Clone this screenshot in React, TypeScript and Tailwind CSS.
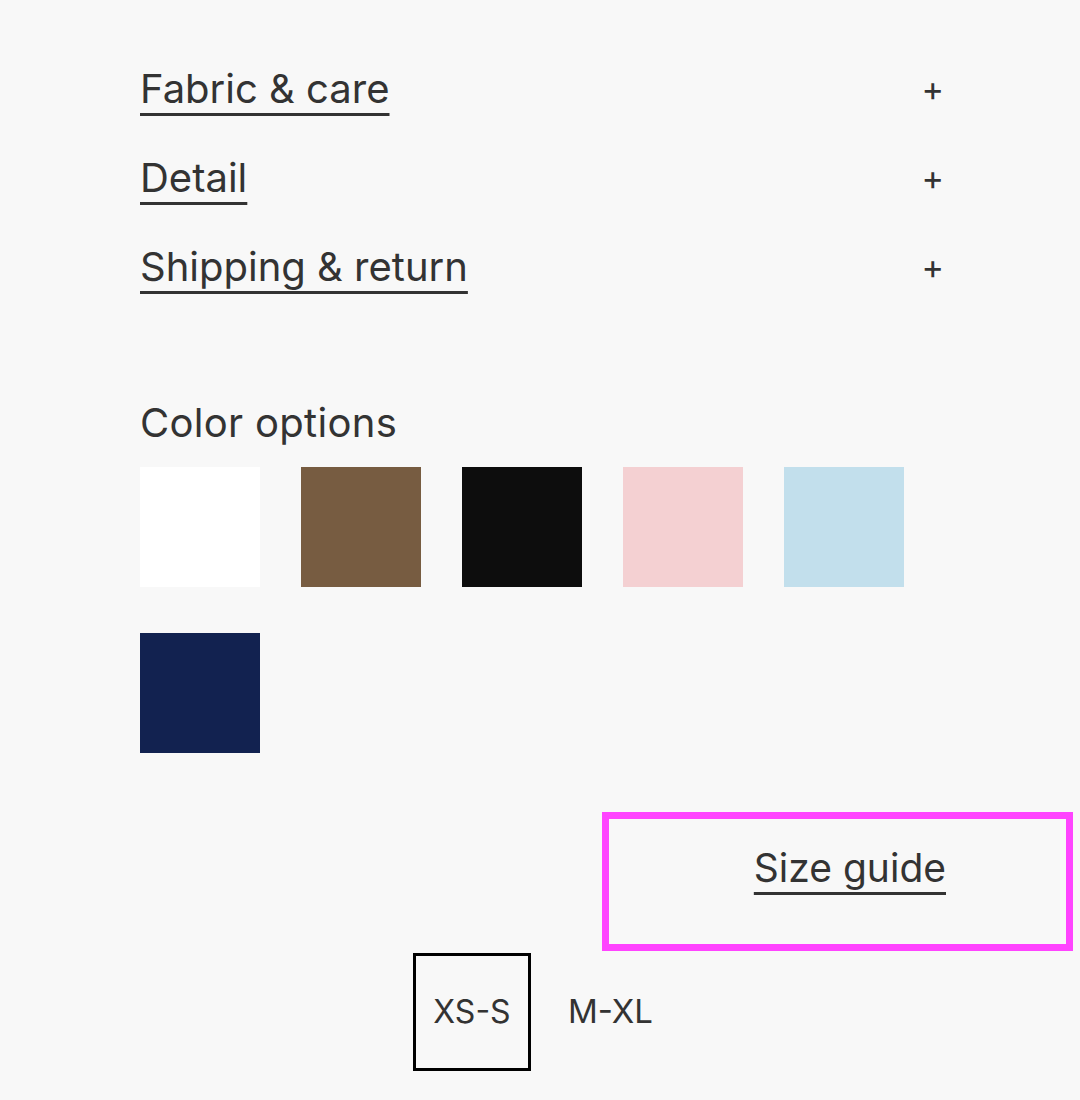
import React from "react";

const sections = ["Fabric & care", "Detail", "Shipping & return"];
const swatches = ["#ffffff", "#775c41", "#0d0d0d", "#f4d0d2", "#c2dfec", "#122250"];

const App = () => {
    return (
        <div className="min-h-[1100px] w-[1080px] bg-[#f8f8f8] text-[#333333]" style={{ fontFamily: "Inter, 'Liberation Sans', sans-serif" }}>
            <div className="w-[944px] pl-[140px] pt-[65px]">
                <div className="flex flex-col gap-[41px]">
                    {sections.map((s) => (
                        <div key={s} className="flex h-[48px] items-center justify-between">
                            <span className="text-[40px] leading-[48px] underline decoration-[3px] underline-offset-[10px]">{s}</span>
                            <span className="text-[34px] leading-none">+</span>
                        </div>
                    ))}
                </div>

                <div className="mt-[108px] text-[40px] leading-[48px] tracking-[0.3px]">Color options</div>
                <div className="mt-[20px] grid grid-cols-[repeat(5,120px)] gap-x-[41px] gap-y-[46px]">
                    {swatches.map((c) => (
                        <div key={c} className="h-[120px] w-[120px]" style={{ backgroundColor: c }} />
                    ))}
                </div>
            </div>

            <div className="ml-[602px] mt-[59px] flex h-[139px] w-[471px] justify-end border-[7px] border-[#ff44ff] pr-[120px] pt-[25px]">
                <span className="h-[48px] text-[39px] leading-[48px] underline decoration-[3px] underline-offset-[10px]">Size guide</span>
            </div>

            <div className="ml-[413px] mt-[2px] flex items-center gap-[37px]">
                <div className="flex h-[118px] w-[118px] items-center justify-center border-[3px] border-black text-[32px]">XS-S</div>
                <div className="text-[33px]">M-XL</div>
            </div>
        </div>
    );
};

export default App;
